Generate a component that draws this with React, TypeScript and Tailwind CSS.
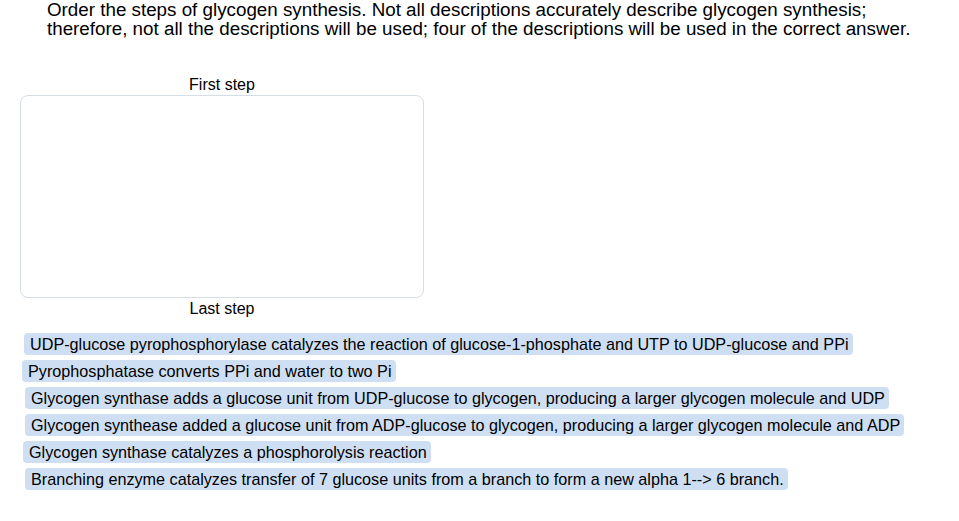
import React from "react";

const options: { text: string; offset: string }[] = [
  {
    text: "UDP-glucose pyrophosphorylase catalyzes the reaction of glucose-1-phosphate and UTP to UDP-glucose and PPi",
    offset: "ml-[24px]",
  },
  { text: "Pyrophosphatase converts PPi and water to two Pi", offset: "ml-[22px]" },
  {
    text: "Glycogen synthase adds a glucose unit from UDP-glucose to glycogen, producing a larger glycogen molecule and UDP",
    offset: "ml-[25px]",
  },
  {
    text: "Glycogen synthease added a glucose unit from ADP-glucose to glycogen, producing a larger glycogen molecule and ADP",
    offset: "ml-[25px]",
  },
  { text: "Glycogen synthase catalyzes a phosphorolysis reaction", offset: "ml-[23px]" },
  {
    text: "Branching enzyme catalyzes transfer of 7 glucose units from a branch to form a new alpha 1--> 6 branch.",
    offset: "ml-[25px]",
  },
];

export default function App() {
  return (
    <div
      className="w-[959px] h-[521px] bg-white text-black overflow-hidden"
      style={{ fontFamily: '"Liberation Sans", Arial, sans-serif' }}
    >
      <p className="pl-[47px] pt-[1px] text-[18.8px] leading-[18.8px]">
        Order the steps of glycogen synthesis. Not all descriptions accurately describe glycogen synthesis;
        <br />
        therefore, not all the descriptions will be used; four of the descriptions will be used in the correct answer.
      </p>

      <div className="ml-[20px] mt-[37px] w-[404px] flex flex-col items-center">
        <div className="text-[16px] leading-[18px]">First step</div>
        <div className="mt-[1px] w-full h-[203px] rounded-[8px] border border-[#d3dee6]" />
        <div className="mt-[2px] text-[16px] leading-[18px]">Last step</div>
      </div>

      <div className="mt-[15px] flex flex-col items-start gap-[5px]">
        {options.map((o) => (
          <div
            key={o.text}
            className={`${o.offset} h-[22px] pl-[6px] pr-[4px] rounded-[4px] bg-[#cfdff3] text-[16.2px] leading-[22px] whitespace-nowrap`}
          >
            {o.text}
          </div>
        ))}
      </div>
    </div>
  );
}
